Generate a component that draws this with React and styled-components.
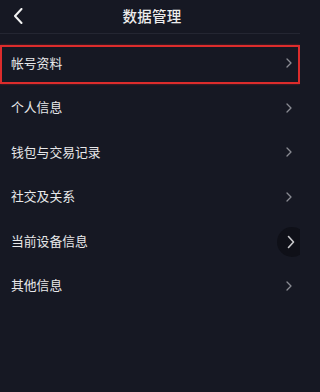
import { createGlobalStyle, styled } from "styled-components";

const GlobalStyle = createGlobalStyle`
    html, body {
        margin: 0;
        padding: 0;
        background: #161823;
    }
    body {
        font-family: "Noto Sans CJK SC", "Noto Sans", sans-serif;
    }
`;

const Page = styled.div`
    width: 300px;
    height: 392px;
    background: #161823;
    position: relative;
    overflow: hidden;
`;

const Header = styled.div`
    height: 33px;
    display: flex;
    align-items: center;
    justify-content: center;
    position: relative;
    border-bottom: 1px solid #242632;
`;

const BackButton = styled.div`
    position: absolute;
    left: 11px;
    top: 7px;
    width: 14px;
    height: 18px;
    display: flex;
    align-items: center;
    justify-content: center;
`;

const Title = styled.h1`
    margin: 0 0 3px 4px;
    font-size: 14.5px;
    font-weight: 500;
    color: #ececec;
    letter-spacing: 0.2px;
`;

const List = styled.div`
    display: flex;
    flex-direction: column;
    padding-top: 7px;
`;

const Row = styled.div`
    height: 44.5px;
    display: flex;
    align-items: center;
    padding: 0 8px 0 11px;
    position: relative;

    ${({ $highlight }) => $highlight && `
        &:before {
            content: '';
            position: absolute;
            left: 0;
            right: 0;
            top: 4px;
            bottom: 2px;
            border: 2px solid #dc2c2c;
            box-shadow: 0 0 2px rgba(220, 44, 44, 0.5);
        }
    `}
`;

const Label = styled.span`
    flex: 1;
    font-size: 12.8px;
    color: #e8e8ea;
    line-height: 1;
`;

const Arrow = styled.svg`
    width: 6px;
    height: 10px;
    flex-shrink: 0;
`;

const FloatButton = styled.div`
    position: absolute;
    left: 277px;
    top: 227px;
    width: 30px;
    height: 30px;
    border-radius: 50%;
    background: #0f1018;
    display: flex;
    align-items: center;
    padding-left: 10px;
    box-sizing: border-box;
`;

const items = [
    "帐号资料",
    "个人信息",
    "钱包与交易记录",
    "社交及关系",
    "当前设备信息",
    "其他信息",
];

function Chevron() {
    return (
        <Arrow viewBox="0 0 6 10">
            <path d="M1 1 L5 5 L1 9" fill="none" stroke="#8a8b93" strokeWidth="1.3" strokeLinecap="round" strokeLinejoin="round" />
        </Arrow>
    );
}

export default function App() {
    return (
        <Page>
            <GlobalStyle />
            <Header>
                <BackButton>
                    <svg width="10" height="16" viewBox="0 0 10 16">
                        <path d="M8.5 1 L2 8 L8.5 15" fill="none" stroke="#f2f2f2" strokeWidth="2" strokeLinecap="round" strokeLinejoin="round" />
                    </svg>
                </BackButton>
                <Title>数据管理</Title>
            </Header>
            <List>
                {items.map((item, i) => (
                    <Row key={item} $highlight={i === 0}>
                        <Label>{item}</Label>
                        <Chevron />
                    </Row>
                ))}
            </List>
            <FloatButton>
                <svg width="8" height="14" viewBox="0 0 8 14">
                    <path d="M1.5 1.5 L6.5 7 L1.5 12.5" fill="none" stroke="#c9c9cc" strokeWidth="1.6" strokeLinecap="round" strokeLinejoin="round" />
                </svg>
            </FloatButton>
        </Page>
    );
}
